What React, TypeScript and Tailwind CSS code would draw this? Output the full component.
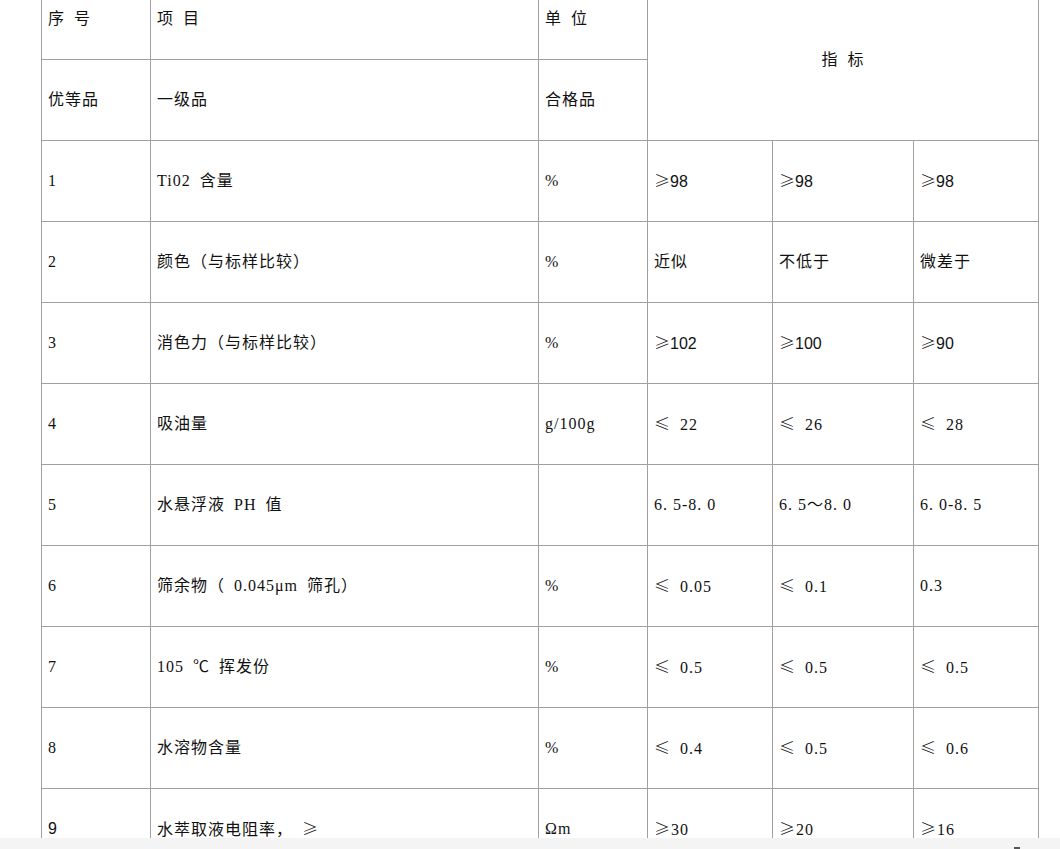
import React from "react";

type Cell = { text: string; sans?: boolean };

const rows: Cell[][] = [
  [{ text: "1" }, { text: "Ti02\u2002含量" }, { text: "%" }, { text: "≥98", sans: true }, { text: "≥98", sans: true }, { text: "≥98", sans: true }],
  [{ text: "2" }, { text: "颜色（与标样比较）" }, { text: "%" }, { text: "近似" }, { text: "不低于" }, { text: "微差于" }],
  [{ text: "3" }, { text: "消色力（与标样比较）" }, { text: "%" }, { text: "≥102", sans: true }, { text: "≥100", sans: true }, { text: "≥90", sans: true }],
  [{ text: "4" }, { text: "吸油量" }, { text: "g/100g" }, { text: "≤\u200222" }, { text: "≤\u200226" }, { text: "≤\u200228" }],
  [{ text: "5" }, { text: "水悬浮液\u2002PH\u2002值" }, { text: "" }, { text: "6. 5-8. 0" }, { text: "6. 5～8. 0" }, { text: "6. 0-8. 5" }],
  [{ text: "6" }, { text: "筛余物（\u20020.045μm\u2002筛孔）" }, { text: "%" }, { text: "≤\u20020.05" }, { text: "≤\u20020.1" }, { text: "0.3" }],
  [{ text: "7" }, { text: "105\u2002℃\u2002挥发份" }, { text: "%" }, { text: "≤\u20020.5" }, { text: "≤\u20020.5" }, { text: "≤\u20020.5" }],
  [{ text: "8" }, { text: "水溶物含量" }, { text: "%" }, { text: "≤\u20020.4" }, { text: "≤\u20020.5" }, { text: "≤\u20020.6" }],
  [{ text: "9", sans: true }, { text: "水萃取液电阻率，\u2002≥" }, { text: "Ωm" }, { text: "≥30" }, { text: "≥20" }, { text: "≥16" }],
];

const td = "border border-[#a0a0a0] h-[81px] px-[6px] align-middle text-left";

// the comparison signs come out full width, as in the Song face
function renderText(t: string) {
  return t.split(/([≥≤])/).map((part, i) =>
    part === "≥" || part === "≤" ? (
      <span key={i} className="font-['Noto_Sans_CJK_SC',sans-serif] font-light">
        {part}
      </span>
    ) : (
      <React.Fragment key={i}>{part}</React.Fragment>
    )
  );
}

export default function App() {
  return (
    <div className="min-h-[849px] bg-white overflow-hidden text-[#111] text-[16px] tracking-[1px] font-['Liberation_Serif','Noto_Sans_CJK_SC',serif]">
      <table className="ml-[41px] mt-[-22px] w-[997px] table-fixed border-collapse">
        <colgroup>
          <col className="w-[109px]" />
          <col className="w-[388px]" />
          <col className="w-[109px]" />
          <col className="w-[125px]" />
          <col className="w-[141px]" />
          <col className="w-[125px]" />
        </colgroup>
        <tbody>
          <tr>
            <td className={td}>序{"\u2002"}号</td>
            <td className={td}>项{"\u2002"}目</td>
            <td className={td}>单{"\u2002"}位</td>
            <td className={td + " !text-center"} colSpan={3} rowSpan={2}>
              指{"\u2002"}标
            </td>
          </tr>
          <tr>
            <td className={td}>优等品</td>
            <td className={td}>一级品</td>
            <td className={td}>合格品</td>
          </tr>
          {rows.map((r, i) => (
            <tr key={i}>
              {r.map((c, j) => (
                <td
                  key={j}
                  className={
                    td +
                    (c.sans
                      ? " font-['Liberation_Sans','Noto_Sans_CJK_SC',sans-serif] tracking-normal"
                      : "")
                  }
                >
                  {renderText(c.text)}
                </td>
              ))}
            </tr>
          ))}
        </tbody>
      </table>
      {/* bottom scrollbar strip */}
      <div className="fixed bottom-0 left-0 right-0 h-[11px] bg-[#f4f4f4] flex justify-end items-end pr-[40px]">
        <div className="w-[6px] h-[2px] bg-[#555]" />
      </div>
    </div>
  );
}
